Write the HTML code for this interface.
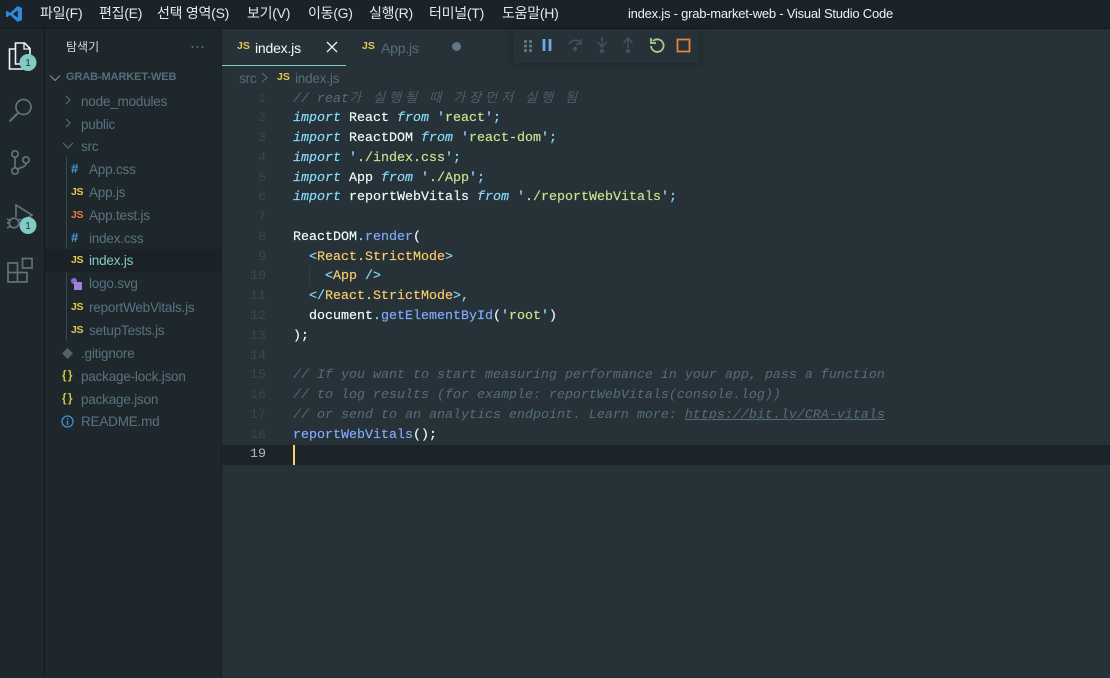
<!DOCTYPE html>
<html lang="ko"><head><meta charset="utf-8"><title>index.js - grab-market-web - Visual Studio Code</title>
<style>
*{box-sizing:border-box}
html,body{margin:0;padding:0;width:1110px;height:678px;overflow:hidden;background:#263238;font-family:"Liberation Sans","Noto Sans CJK KR",sans-serif}
.a{position:absolute;white-space:nowrap}
#title{left:0;top:0;width:1110px;height:29px;background:#1a2329;border-bottom:1px solid #141b20}
.m{position:absolute;top:5px;font:14px/17px "Liberation Sans","Noto Sans CJK KR",sans-serif;color:#e4e8ea;letter-spacing:-.25px;white-space:nowrap}
#act{left:0;top:29px;width:45px;height:649px;background:#1e272c;border-right:1px solid #141b20}
#side{left:45px;top:29px;width:177px;height:649px;background:#1e272c;border-right:1px solid #171f24}
.r{position:absolute;left:0;width:176px;height:23px;font-size:13.5px;line-height:23px;color:#587380;letter-spacing:-.2px;white-space:nowrap}
.r span.t{position:absolute;top:0}
.i{position:absolute;top:0;font:bold 10.5px/22px "Liberation Sans",sans-serif;letter-spacing:-.3px}
#code{position:absolute;left:293px;top:89.6px;font:13.33px/19.76px "Liberation Mono","Noto Sans CJK KR",monospace;color:#eeffff;white-space:pre;-webkit-text-stroke:.15px}
#nums{position:absolute;left:222px;width:44px;top:89.6px;font:13.33px/19.76px "Liberation Mono",monospace;color:#37474f;text-align:right;white-space:pre}
.k{color:#89ddff;font-style:italic}.s{color:#c3e88d}.p{color:#89ddff}.c{color:#546e7a;font-style:italic;-webkit-text-stroke:0}.f{color:#82aaff}.y{color:#ffcb6b}
.h{letter-spacing:3.73px;color:#4a5f69}
</style></head><body>
<div class="a" id="title"></div>
<svg class="a" style="left:5px;top:5px" width="18" height="18" viewBox="0 0 18 18"><path d="M12.6 1 17 3v12l-4.4 2L5 10l-3 2.3L1 11.700V6.300L2 5.700 5 8zM12.800 5.200 8 9l4.800 3.800z" fill="#2f88d8" fill-rule="evenodd"/></svg>
<span class="m" style="left:40px">파일(F)</span><span class="m" style="left:99px">편집(E)</span><span class="m" style="left:157px">선택 영역(S)</span><span class="m" style="left:247px">보기(V)</span><span class="m" style="left:308px">이동(G)</span><span class="m" style="left:369px">실행(R)</span><span class="m" style="left:429px">터미널(T)</span><span class="m" style="left:502px">도움말(H)</span>
<span class="m" style="left:628px;font-size:13px;color:#eef2f3;letter-spacing:-.23px">index.js - grab-market-web - Visual Studio Code</span>

<div class="a" id="act"></div>
<svg class="a" style="left:0;top:29px" width="45" height="270" viewBox="0 0 45 270" fill="none">
<path d="M15.500 20H9.500v20h13v-5" stroke="#eef6f6" stroke-width="1.600"/><path d="M15.500 14h9l5.500 5.500V35H15.500z" stroke="#eef6f6" stroke-width="1.600"/><path d="M24 14v6h6" stroke="#eef6f6" stroke-width="1.300"/>
<g stroke="#5e737c" stroke-width="1.700"><circle cx="23.500" cy="78" r="7.500"/><path d="M18 84 9.500 92.500" stroke-width="2"/>
<circle cx="15" cy="125" r="3.200"/><circle cx="15" cy="142" r="3.200"/><circle cx="26" cy="131" r="3.200"/><path d="M15 128.500v10M26 134.500c0 3-4 3.500-9.500 6"/>
<path d="M16 188v-12l16 10-8 5"/><circle cx="14" cy="194" r="4.800"/><path d="M7 190l3 1.500M7 194h2.500M7 199l3-1.500M21 190l-3 1.500"/>
<path d="M8 234h9.500v19H8zM8 243.500h19V253H8z"/><rect x="22.500" y="229.500" width="9.500" height="9.500"/></g>
<circle cx="28" cy="33.500" r="8.500" fill="#80cbc4"/><circle cx="28" cy="196.500" r="8.500" fill="#80cbc4"/>
<text x="28" y="37" font-family="Liberation Sans" font-size="10" fill="#263238" text-anchor="middle">1</text><text x="28" y="200" font-family="Liberation Sans" font-size="10" fill="#263238" text-anchor="middle">1</text>
</svg>

<div class="a" id="side"></div>
<span class="a" style="left:66px;top:39px;font:12px/15px 'Noto Sans CJK KR',sans-serif;color:#cfd8dc">탐색기</span>
<svg class="a" style="left:190px;top:44px" width="16" height="6" fill="#546e7a"><circle cx="2.500" cy="3" r="1"/><circle cx="7.500" cy="3" r="1"/><circle cx="12.500" cy="3" r="1"/></svg>
<div class="a" style="left:66px;top:156px;width:1px;height:185px;background:#37474f"></div>
<svg class="a" style="left:48px;top:70px" width="50" height="90" fill="none" stroke="#546e7a" stroke-width="1.100"><path d="M2 5.500 7 10.500l5-5" stroke="#7f929b"/><path d="M18 26l4 4-4 4M18 49l4 4-4 4M15 73l5 5 5-5"/></svg>
<span class="a" style="left:66px;top:70px;font:bold 11px/15px 'Liberation Sans';color:#546e7a;letter-spacing:-.1px">GRAB-MARKET-WEB</span>

<div class="a r" style="left:45px;top:90px"><span class="t" style="left:36px">node_modules</span></div>
<div class="a r" style="left:45px;top:113px"><span class="t" style="left:36px">public</span></div>
<div class="a r" style="left:45px;top:135px"><span class="t" style="left:36px">src</span></div>
<div class="a r" style="left:45px;top:158px"><span class="i" style="left:26px;color:#4a9be0;font-size:13px">#</span><span class="t" style="left:44px">App.css</span></div>
<div class="a r" style="left:45px;top:181px"><span class="i" style="left:26px;color:#e5c84f">JS</span><span class="t" style="left:44px">App.js</span></div>
<div class="a r" style="left:45px;top:204px"><span class="i" style="left:26px;color:#f0743e">JS</span><span class="t" style="left:44px">App.test.js</span></div>
<div class="a r" style="left:45px;top:227px"><span class="i" style="left:26px;color:#4a9be0;font-size:13px">#</span><span class="t" style="left:44px">index.css</span></div>
<div class="a r" style="left:45px;top:249px;background:#1a2227;color:#80cbc4"><span class="i" style="left:26px;color:#e5c84f">JS</span><span class="t" style="left:44px">index.js</span></div>
<div class="a r" style="left:45px;top:272px"><svg style="position:absolute;left:25px;top:5px" width="14" height="14"><circle cx="4" cy="4" r="3" fill="#8a6fc8"/><rect x="4" y="5" width="8" height="8" fill="#9a83d8"/></svg><span class="t" style="left:44px">logo.svg</span></div>
<div class="a r" style="left:45px;top:296px"><span class="i" style="left:26px;color:#e5c84f">JS</span><span class="t" style="left:44px">reportWebVitals.js</span></div>
<div class="a r" style="left:45px;top:319px"><span class="i" style="left:26px;color:#e5c84f">JS</span><span class="t" style="left:44px">setupTests.js</span></div>
<div class="a r" style="left:45px;top:342px"><svg style="position:absolute;left:17px;top:6px" width="11" height="11"><path d="M5.500 0 11 5.500 5.500 11 0 5.500z" fill="#4f636d"/></svg><span class="t" style="left:36px">.gitignore</span></div>
<div class="a r" style="left:45px;top:365px"><span class="i" style="left:17px;color:#cbcb41;font-size:11.500px;letter-spacing:1.500px">{}</span><span class="t" style="left:36px">package-lock.json</span></div>
<div class="a r" style="left:45px;top:388px"><span class="i" style="left:17px;color:#cbcb41;font-size:11.500px;letter-spacing:1.500px">{}</span><span class="t" style="left:36px">package.json</span></div>
<div class="a r" style="left:45px;top:410px"><svg style="position:absolute;left:16px;top:5px" width="13" height="13" fill="none"><circle cx="6.500" cy="6.500" r="5.500" stroke="#3f8fd6" stroke-width="1.300"/><path d="M6.500 3v1.300M6.500 5.500V10" stroke="#3f8fd6" stroke-width="1.400"/></svg><span class="t" style="left:36px">README.md</span></div>

<div class="a" style="left:222px;top:29px;width:124px;height:37px;border-bottom:1px solid #80cbc4"></div>
<span class="a" style="left:237px;top:40px;font:bold 10.500px/13px 'Liberation Sans';color:#e5c84f">JS</span>
<span class="a" style="left:255px;top:39px;font-size:14px;line-height:18px;letter-spacing:-.2px;color:#eeffff">index.js</span>
<svg class="a" style="left:326px;top:41px" width="12" height="12" stroke="#e8eeee" stroke-width="1.300"><path d="M1 1l10 10M11 1 1 11"/></svg>
<span class="a" style="left:362px;top:40px;font:bold 10.500px/13px 'Liberation Sans';color:#e5c84f">JS</span>
<span class="a" style="left:381px;top:39px;font-size:14px;line-height:18px;letter-spacing:-.2px;color:#546e7a">App.js</span>
<div class="a" style="left:452px;top:42px;width:9px;height:9px;border-radius:50%;background:#5f7887"></div>

<span class="a" style="left:239px;top:70px;font-size:13.500px;line-height:17px;color:#546e7a;letter-spacing:-.2px">src</span>
<svg class="a" style="left:260px;top:71px" width="9" height="13" fill="none" stroke="#546e7a" stroke-width="1.100"><path d="M2 2l5 4.500-5 4.500"/></svg>
<span class="a" style="left:277px;top:71px;font:bold 10.500px/13px 'Liberation Sans';color:#e5c84f">JS</span>
<span class="a" style="left:295px;top:70px;font-size:13.500px;line-height:17px;color:#546e7a;letter-spacing:-.2px">index.js</span>

<div class="a" style="left:222px;top:445px;width:888px;height:20px;background:#1c2429"></div>
<div class="a" style="left:293px;top:445px;width:2px;height:20px;background:#ffcc6e"></div>
<div class="a" style="left:309px;top:266px;width:1px;height:20px;background:#303f47"></div>
<div id="nums">1
2
3
4
5
6
7
8
9
10
11
12
13
14
15
16
17
18
<span style="color:#a9bac2">19</span></div>
<div id="code"><span class="c">// reat<span class="h">가</span> <span class="h">실행될</span> <span class="h">때</span> <span class="h">가장먼저</span> <span class="h">실행</span> <span class="h">됨</span></span>
<span class="k">import</span> React <span class="k">from</span> <span class="p">'</span><span class="s">react</span><span class="p">';</span>
<span class="k">import</span> ReactDOM <span class="k">from</span> <span class="p">'</span><span class="s">react-dom</span><span class="p">';</span>
<span class="k">import</span> <span class="p">'</span><span class="s">./index.css</span><span class="p">';</span>
<span class="k">import</span> App <span class="k">from</span> <span class="p">'</span><span class="s">./App</span><span class="p">';</span>
<span class="k">import</span> reportWebVitals <span class="k">from</span> <span class="p">'</span><span class="s">./reportWebVitals</span><span class="p">';</span>

ReactDOM<span class="p">.</span><span class="f">render</span>(
  <span class="p">&lt;</span><span class="y">React.StrictMode</span><span class="p">&gt;</span>
    <span class="p">&lt;</span><span class="y">App</span> <span class="p">/&gt;</span>
  <span class="p">&lt;/</span><span class="y">React.StrictMode</span><span class="p">&gt;,</span>
  document<span class="p">.</span><span class="f">getElementById</span>(<span class="p">'</span><span class="s">root</span><span class="p">'</span>)
);

<span class="c">// If you want to start measuring performance in your app, pass a function</span>
<span class="c">// to log results (for example: reportWebVitals(console.log))</span>
<span class="c">// or send to an analytics endpoint. Learn more: <span style="text-decoration:underline">https://bit.ly/CRA-vitals</span></span>
<span class="f">reportWebVitals</span>();
</div>

<div class="a" style="left:513px;top:29px;width:186px;height:34px;background:#263238;box-shadow:0 0 8px rgba(0,0,0,.3)"></div>
<svg class="a" style="left:513px;top:29px" width="186" height="34" fill="none">
<g fill="#5f7077"><rect x="11" y="11" width="3" height="3"/><rect x="16" y="11" width="3" height="3"/><rect x="11" y="15.500" width="3" height="3"/><rect x="16" y="15.500" width="3" height="3"/><rect x="11" y="20" width="3" height="3"/><rect x="16" y="20" width="3" height="3"/></g>
<path d="M31 10v12M37 10v12" stroke="#6ea8e8" stroke-width="2.800"/>
<g stroke="#3d5361" stroke-width="1.500"><path d="M56 15c3-5 10-5 12 0M68 10v5h-5"/><path d="M89 8v10M84.500 13l4.500 5 4.500-5M115 19V9M110.500 14l4.500-5 4.500 5"/></g>
<g fill="#3d5361"><circle cx="62" cy="20" r="2.200"/><circle cx="89" cy="22" r="2.200"/><circle cx="115" cy="22" r="2.200"/></g>
<path d="M140 12a6.300 6.300 0 1 1-2 5M138 9v5h5" stroke="#a1d094" stroke-width="1.800"/>
<rect x="164.500" y="10.500" width="12" height="12" stroke="#e8833f" stroke-width="1.800"/>
</svg>
</body></html>
